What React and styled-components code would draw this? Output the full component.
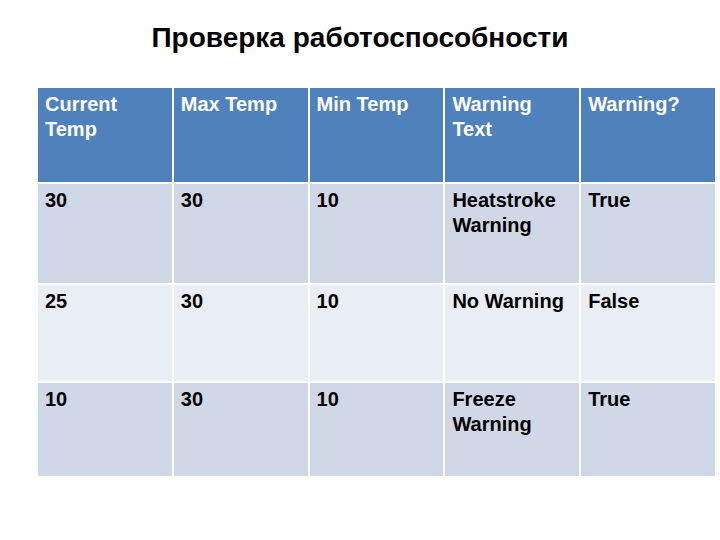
import React from "react"
import styled, { createGlobalStyle } from "styled-components"

const GlobalStyle = createGlobalStyle`
  body {
    margin: 0;
    background: #ffffff;
    font-family: "Liberation Sans", Arial, sans-serif;
  }
`

const Page = styled.div`
  width: 720px;
  height: 540px;
  display: flex;
  flex-direction: column;
  background: #ffffff;
`

const Title = styled.h1`
  margin: 21px 0 0 0;
  height: 67px;
  font-size: 28px;
  font-weight: bold;
  color: #000000;
  text-align: center;
  line-height: 34px;
`

const Table = styled.table`
  margin-left: 36px;
  width: 681px;
  border-collapse: collapse;
  table-layout: fixed;
`

const HeadCell = styled.th`
  box-sizing: border-box;
  height: 95px;
  padding: 4px 7px;
  vertical-align: top;
  text-align: left;
  background: #4f81bd;
  color: #ffffff;
  font-size: 20px;
  font-weight: bold;
  line-height: 25px;
  border: 2px solid #ffffff;
  border-top: none;
`

const Cell = styled.td`
  box-sizing: border-box;
  height: ${(p) => p.$h}px;
  padding: 4px 7px;
  vertical-align: top;
  background: ${(p) => (p.$odd ? "#d0d8e8" : "#e9edf4")};
  color: #000000;
  font-size: 20px;
  font-weight: bold;
  line-height: 25px;
  border: 2px solid #ffffff;
`

const headers = ["Current Temp", "Max Temp", "Min Temp", "Warning Text", "Warning?"]

const rows = [
  { h: 101, cells: ["30", "30", "10", "Heatstroke Warning", "True"] },
  { h: 98, cells: ["25", "30", "10", "No Warning", "False"] },
  { h: 95, cells: ["10", "30", "10", "Freeze Warning", "True"] },
]

export default function App() {
  return (
    <>
      <GlobalStyle />
      <Page>
        <Title>Проверка работоспособности</Title>
        <Table>
          <thead>
            <tr>
              {headers.map((h) => (
                <HeadCell key={h}>{h}</HeadCell>
              ))}
            </tr>
          </thead>
          <tbody>
            {rows.map((r, i) => (
              <tr key={i}>
                {r.cells.map((c, j) => (
                  <Cell key={j} $odd={i % 2 === 0} $h={r.h}>
                    {c}
                  </Cell>
                ))}
              </tr>
            ))}
          </tbody>
        </Table>
      </Page>
    </>
  )
}
